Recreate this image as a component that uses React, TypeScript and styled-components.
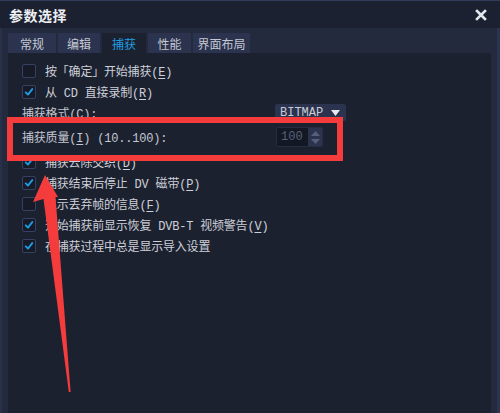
import React from 'react';
import styled, { createGlobalStyle } from 'styled-components';

const GlobalStyle = createGlobalStyle`
  html, body {
    margin: 0;
    padding: 0;
    background: #1c2130;
  }
`;

const tabs = [
  { label: '常规', w: 48 },
  { label: '编辑', w: 42 },
  { label: '捕获', w: 44, active: true },
  { label: '性能', w: 43 },
  { label: '界面布局', w: 57 },
];

const CheckIcon = () => (
  <svg width="14" height="14" viewBox="0 0 14 14">
    <path d="M3.2 7.4 L5.8 10 L10.8 3.6" fill="none" stroke="#1e9be2" strokeWidth="2.2" strokeLinecap="round" strokeLinejoin="round" />
  </svg>
);

// label text with the access key shown underlined, e.g. "(E)"
const Text: React.FC<{ text: string; accel?: string }> = ({ text, accel }) => (
  <>
    {text}
    {accel ? (<>(<Key>{accel}</Key>)</>) : null}
  </>
);

const Check: React.FC<{ checked?: boolean; label: string; accel?: string }> = ({ checked, label, accel }) => (
  <Row>
    <Box>{checked ? <CheckIcon /> : null}</Box>
    <Label><Text text={label} accel={accel} /></Label>
  </Row>
);

const App: React.FC = () => {
  return (
    <>
      <GlobalStyle />
      <Dialog>
        <TitleBar>
          <Title>参数选择</Title>
          <svg width="12" height="12" viewBox="0 0 12 12">
            <path d="M2 2 L10 10 M10 2 L2 10" stroke="#e3e6ec" strokeWidth="2.6" strokeLinecap="square" />
          </svg>
        </TitleBar>

        <Frame>
          <TabStrip>
            {tabs.map((t) => (
              <Tab key={t.label} $active={t.active} $w={t.w}>{t.label}</Tab>
            ))}
          </TabStrip>

          <Panel>
            <Check label="按「确定」开始捕获" accel="E" />
            <Check checked label="从 CD 直接录制" accel="R" />
            <FieldRow>
              <FieldLabel><Text text="捕获格式" accel="C" />:</FieldLabel>
              <Select>
                <span>BITMAP</span>
                <svg width="9" height="6" viewBox="0 0 9 6">
                  <path d="M0 0 H9 L4.5 6 Z" fill="#e6e8ee" />
                </svg>
              </Select>
            </FieldRow>
            <FieldRow $tall>
              <FieldLabel><Text text="捕获质量" accel="I" /> (10..100):</FieldLabel>
              <Spin>
                <SpinValue>100</SpinValue>
                <SpinButtons>
                  <svg width="9" height="5" viewBox="0 0 9 5"><path d="M0 5 L4.5 0 L9 5 Z" fill="#56607a" /></svg>
                  <svg width="9" height="5" viewBox="0 0 9 5"><path d="M0 0 L9 0 L4.5 5 Z" fill="#56607a" /></svg>
                </SpinButtons>
              </Spin>
            </FieldRow>
            <Check checked label="捕获去除交织" accel="D" />
            <Check checked label="捕获结束后停止 DV 磁带" accel="P" />
            <Check label="显示丢弃帧的信息" accel="F" />
            <Check checked label="开始捕获前显示恢复 DVB-T 视频警告" accel="V" />
            <Check checked label="在捕获过程中总是显示导入设置" />
          </Panel>
        </Frame>

        <Highlight />
        <Arrow width="500" height="413" viewBox="0 0 500 413">
          <path d="M45 175 L33 202 L43.5 199 L68.8 392 L70.6 392 L55.5 197 L58 197 Z" fill="#f43c3c" />
        </Arrow>
      </Dialog>
    </>
  );
};

const Dialog = styled.div`
  position: relative;
  width: 500px;
  height: 413px;
  display: flex;
  flex-direction: column;
  background: #232a3e;
  overflow: hidden;
  font-family: "Liberation Mono", "Noto Sans CJK SC", monospace;
`;

const TitleBar = styled.div`
  height: 27px;
  flex: none;
  display: flex;
  align-items: center;
  justify-content: space-between;
  padding: 0 13px 0 9px;
  background: #1c2131;
  border-top: 1px solid #333b5a;
`;

const Title = styled.div`
  font-family: "Noto Sans CJK SC", sans-serif;
  font-size: 14px;
  font-weight: 700;
  color: #eceef2;
  letter-spacing: 0.5px;
`;

const Frame = styled.div`
  flex: 1;
  display: flex;
  flex-direction: column;
  padding: 0 9px 0 8px;
  background: #232a3e;
  box-shadow: inset 2px 0 0 #28304a, inset -3px 0 0 #2c3452;
`;

const TabStrip = styled.div`
  height: 20px;
  margin-top: 5px;
  display: flex;
  gap: 2px;
`;

const Tab = styled.div<{ $active?: boolean; $w: number }>`
  width: ${(p) => p.$w}px;
  display: flex;
  align-items: center;
  justify-content: center;
  font-family: "Noto Sans CJK SC", sans-serif;
  font-size: 12px;
  color: ${(p) => (p.$active ? '#1f9de0' : '#c4c8d2')};
  background: ${(p) => (p.$active ? '#1c2130' : '#2b334e')};
`;

const Panel = styled.div`
  flex: 1;
  display: flex;
  flex-direction: column;
  padding: 7px 0 0 14px;
  background: #1c2130;
`;

const Row = styled.div`
  height: 21px;
  display: flex;
  align-items: center;
  gap: 9px;
`;

const Box = styled.div`
  width: 14px;
  height: 14px;
  box-sizing: border-box;
  border: 1px solid #364060;
  border-radius: 2px;
  background: #171b27;
  display: flex;
  align-items: center;
  justify-content: center;
`;

const Label = styled.span`
  font-size: 12px;
  color: #cdd0d8;
  white-space: nowrap;
  letter-spacing: -0.2px;
`;

const Key = styled.span`
  text-decoration: underline;
  text-underline-offset: 2px;
`;

const FieldRow = styled.div<{ $tall?: boolean }>`
  height: ${(p) => (p.$tall ? 28 : 21)}px;
  display: flex;
  align-items: center;
`;

const FieldLabel = styled.span`
  width: 253px;
  font-size: 12px;
  color: #c3c7d0;
  white-space: nowrap;
  letter-spacing: -0.2px;
`;

const Select = styled.div`
  width: 71px;
  height: 17px;
  box-sizing: border-box;
  display: flex;
  align-items: center;
  justify-content: space-between;
  padding: 0 6px 0 5px;
  background: #2b334e;
  border-radius: 2px;
  font-size: 12px;
  color: #c9ccd4;
`;

const Spin = styled.div`
  width: 47px;
  height: 20px;
  box-sizing: border-box;
  display: flex;
  border: 1px solid #262d42;
  border-radius: 2px;
  margin-left: 1px;
`;

const SpinValue = styled.div`
  flex: 1;
  display: flex;
  align-items: center;
  padding-left: 4px;
  background: #141824;
  font-size: 12px;
  color: #59607a;
`;

const SpinButtons = styled.div`
  width: 14px;
  display: flex;
  flex-direction: column;
  align-items: center;
  justify-content: center;
  gap: 3px;
  background: #2b334e;
`;

const Highlight = styled.div`
  position: absolute;
  left: 7px;
  top: 117px;
  width: 336px;
  height: 44px;
  box-sizing: border-box;
  border: 6px solid #f43c3c;
  pointer-events: none;
`;

const Arrow = styled.svg`
  position: absolute;
  left: 0;
  top: 0;
  pointer-events: none;
`;

export default App;
